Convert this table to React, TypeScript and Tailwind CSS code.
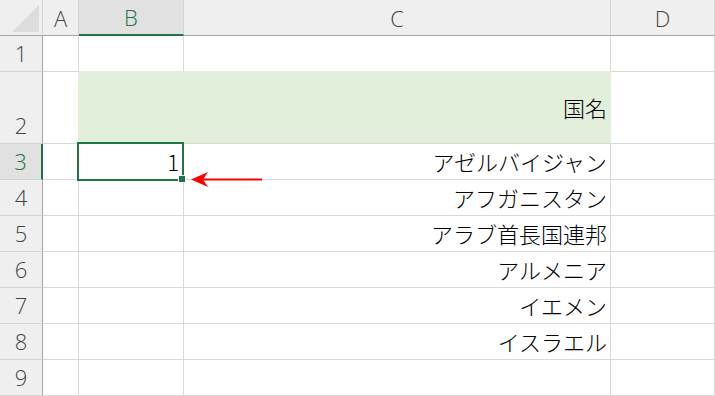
import React from "react";

const COLS = ["A", "B", "C", "D"];

type Row = { n: number; c?: string; b?: string; tall?: boolean; fill?: boolean };

const ROWS: Row[] = [
  { n: 1 },
  { n: 2, c: "国名", tall: true, fill: true },
  { n: 3, b: "1", c: "アゼルバイジャン" },
  { n: 4, c: "アフガニスタン" },
  { n: 5, c: "アラブ首長国連邦" },
  { n: 6, c: "アルメニア" },
  { n: 7, c: "イエメン" },
  { n: 8, c: "イスラエル" },
  { n: 9 },
];

const headFont = { fontFamily: '"Open Sans", "Noto Sans", sans-serif' };
const cellFont = { fontFamily: '"Noto Sans CJK JP", "Noto Sans", sans-serif' };

function ColumnHeader({ label }: { label: string }) {
  const active = label === "B";
  return (
    <div
      style={headFont}
      className={
        active
          ? "flex items-center justify-center bg-[#e1e1e1] border-r border-r-[#d4d4d4] border-b-2 border-b-[#217346] text-[#217346] text-[22px] font-light leading-none"
          : "flex items-center justify-center bg-[#efefef] border-r border-r-[#d4d4d4] border-b border-b-[#a6a6a6] text-[#444444] text-[22px] font-light leading-none"
      }
    >
      {label}
    </div>
  );
}

function RowHeader({ n }: { n: number }) {
  const active = n === 3;
  return (
    <div
      style={headFont}
      className={
        active
          ? "flex items-end justify-center bg-[#e1e1e1] border-b border-b-[#d4d4d4] border-r-2 border-r-[#217346] text-[#217346] text-[22px] font-light"
          : "flex items-end justify-center bg-[#efefef] border-b border-b-[#d4d4d4] border-r border-r-[#a6a6a6] text-[#444444] text-[22px] font-light"
      }
    >
      <span className="h-[35px] leading-[35px]">{n}</span>
    </div>
  );
}

export default function App() {
  return (
    <div className="relative w-[715px] h-[396px] overflow-hidden bg-white">
      <div className="grid grid-cols-[43px_36px_105px_427px_104px] grid-rows-[36px_36px_72px_36px_36px_36px_36px_36px_36px_36px]">
        {/* corner with select-all triangle */}
        <div className="bg-[#efefef] border-r border-r-[#d4d4d4] border-b border-b-[#a6a6a6] relative">
          <svg width="43" height="36" className="block">
            <polygon points="12,32 39,32 39,5" fill="#dcdcdc" />
          </svg>
        </div>
        {COLS.map((c) => (
          <ColumnHeader key={c} label={c} />
        ))}

        {ROWS.map((r) => (
          <React.Fragment key={r.n}>
            <RowHeader n={r.n} />
            <div
              className={
                r.fill
                  ? "border-r border-r-[#e2efda] border-b border-b-[#d9d9d9]"
                  : "border-r border-b border-[#d9d9d9]"
              }
            />
            {r.fill ? (
              <div
                style={cellFont}
                className="col-span-2 flex items-center justify-end bg-[#e2efda] border-b border-b-[#d9d9d9] border-r border-r-[#e2efda] pr-[3px] text-[22px] font-light text-black"
              >
                {r.c}
              </div>
            ) : (
              <>
                <div
                  style={cellFont}
                  className={
                    r.n === 1
                      ? "flex items-center justify-end border-r border-r-[#d9d9d9] border-b border-b-[#e2efda] pr-1 text-[22px] font-light text-black"
                      : "flex items-center justify-end border-r border-b border-[#d9d9d9] pr-1 text-[22px] font-light text-black"
                  }
                >
                  {r.b}
                </div>
                <div
                  style={cellFont}
                  className={
                    r.n === 1
                      ? "flex items-center justify-end border-r border-r-[#d9d9d9] border-b border-b-[#e2efda] pr-[3px] text-[22px] font-light text-black"
                      : "flex items-center justify-end border-r border-b border-[#d9d9d9] pr-[3px] text-[22px] font-light text-black"
                  }
                >
                  {r.c}
                </div>
              </>
            )}
            <div className="border-r border-b border-[#d9d9d9]" />
          </React.Fragment>
        ))}
      </div>

      {/* active cell outline and fill handle */}
      <div className="absolute left-[77px] top-[142px] w-[107px] h-[39px] border-2 border-[#217346] pointer-events-none" />
      <div className="absolute left-[178px] top-[175px] w-[8px] h-[8px] bg-[#217346] border border-white" />

      {/* red pointer arrow */}
      <svg className="absolute left-[188px] top-[168px]" width="80" height="24" viewBox="0 0 80 24">
        <line x1="14" y1="11.5" x2="74" y2="11.5" stroke="#ff0000" strokeWidth="2.2" />
        <polygon points="3,11.5 20,4 15,11.5 20,19" fill="#ff0000" />
      </svg>
    </div>
  );
}
